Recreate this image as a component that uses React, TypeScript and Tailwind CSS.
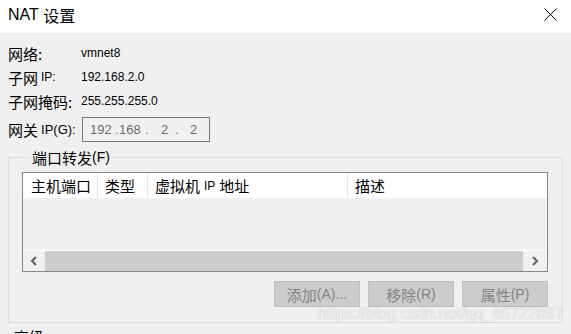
const cjk = '"Noto Sans CJK SC", sans-serif';
const latin = '"Liberation Sans", Arial, sans-serif';

const Zh = ({ children, className = '' }: { children: React.ReactNode; className?: string }) => (
  <span className={`font-['Noto_Sans_CJK_SC',sans-serif] text-[15px] ${className}`}>{children}</span>
);
const En = ({ children, className = '' }: { children: React.ReactNode; className?: string }) => (
  <span className={`font-['Liberation_Sans',Arial,sans-serif] text-[12px] ${className}`}>{children}</span>
);

const Row = ({ label, value }: { label: React.ReactNode; value: string }) => (
  <div className="flex h-[24px] items-center">
    <div className="w-[73px] flex items-center">{label}</div>
    <En className="text-[12px]">{value}</En>
  </div>
);

const Chevron = ({ dir }: { dir: 'left' | 'right' }) => (
  <svg width="8" height="10" viewBox="0 0 8 10">
    {dir === 'left' ? (
      <polyline points="6,1 2,5 6,9" fill="none" stroke="#606060" strokeWidth="2" />
    ) : (
      <polyline points="2,1 6,5 2,9" fill="none" stroke="#606060" strokeWidth="2" />
    )}
  </svg>
);

const buttons = [
  { zh: '添加', en: '(A)...' },
  { zh: '移除', en: '(R)' },
  { zh: '属性', en: '(P)' },
];

export default function App() {
  return (
    <div className="w-[571px] h-[334px] overflow-hidden bg-[#f0f0f0] text-black relative leading-none">
      {/* title bar */}
      <div className="h-[33px] bg-white flex items-start justify-between pl-[8px] pr-[14px] pt-[6px]">
        <div className="flex items-center h-[18px]">
          <span style={{ fontFamily: latin }} className="text-[16px]">NAT&nbsp;</span>
          <span style={{ fontFamily: cjk }} className="text-[16px]">设置</span>
        </div>
        <svg width="13" height="13" viewBox="0 0 13 13" className="mt-[2px]">
          <path d="M0.5 0.5 L12.5 12.5 M12.5 0.5 L0.5 12.5" stroke="#000" strokeWidth="1" fill="none" />
        </svg>
      </div>

      {/* settings */}
      <div className="pl-[8px] pt-[8px] flex flex-col">
        <Row label={<Zh>网络:</Zh>} value="vmnet8" />
        <Row label={<><Zh>子网 </Zh><En className="ml-[3px]">IP:</En></>} value="192.168.2.0" />
        <Row label={<Zh>子网掩码:</Zh>} value="255.255.255.0" />
        <div className="flex h-[28px] items-center mt-[2px]">
          <div className="w-[74px] flex items-center">
            <Zh>网关 </Zh>
            <En className="ml-[3px] text-[13px]">IP(G):</En>
          </div>
          <div className="w-[128px] h-[25px] border border-[#7a7a7a] flex items-center pl-[7px] text-[#6d6d6d] font-['Liberation_Sans',Arial,sans-serif] text-[13px]">
            <span className="w-[25px]">192</span>
            <span className="w-[4px]">.</span>
            <span className="w-[26px]">168</span>
            <span className="w-[16px]">.</span>
            <span className="w-[14px]">2</span>
            <span className="w-[15px]">.</span>
            <span>2</span>
          </div>
        </div>
      </div>

      {/* port forwarding group */}
      <fieldset className="mx-[8px] mt-[4px] border border-[#dcdcdc] h-[176px] pl-[13px] pr-[14px] pb-[14px]">
        <legend className="ml-[8px] px-[2px] h-[20px] flex items-center">
          <Zh>端口转发</Zh>
          <span className="font-['Liberation_Sans',Arial,sans-serif] text-[14px]">(F)</span>
        </legend>
        <div className="mt-[5px] border border-[#828790] flex flex-col">
          <div className="h-[25px] bg-white flex">
            <div className="w-[75px] pl-[8px] flex items-center border-r border-[#e5e5e5]">
              <Zh>主机端口</Zh>
            </div>
            <div className="w-[50px] pl-[7px] flex items-center border-r border-[#e5e5e5]">
              <Zh>类型</Zh>
            </div>
            <div className="w-[200px] pl-[7px] flex items-center border-r border-[#e5e5e5]">
              <Zh>虚拟机 </Zh>
              <En className="mx-[4px]">IP</En>
              <Zh>地址</Zh>
            </div>
            <div className="flex-1 pl-[7px] flex items-center">
              <Zh>描述</Zh>
            </div>
          </div>
          <div className="h-[52px]" />
          <div className="h-[1px] bg-white" />
          <div className="h-[20px] flex">
            <div className="w-[22px] flex items-center justify-center">
              <Chevron dir="left" />
            </div>
            <div className="flex-1 bg-[#cdcdcd]" />
            <div className="w-[24px] flex items-center justify-center">
              <Chevron dir="right" />
            </div>
          </div>
        </div>
        <div className="flex justify-end gap-[8px] mt-[9px]">
          {buttons.map((b) => (
            <div
              key={b.zh}
              className="w-[86px] h-[26px] bg-[#cccccc] border border-[#bfbfbf] flex items-center justify-center text-[#838383]"
            >
              <Zh>{b.zh}</Zh>
              <span className="font-['Liberation_Sans',Arial,sans-serif] text-[14px]">{b.en}</span>
            </div>
          ))}
        </div>
      </fieldset>

      <div className="pl-[14px] mt-[6px]">
        <Zh>高级</Zh>
      </div>

      {/* watermark */}
      <div className="absolute left-[318px] top-[306px] font-['Liberation_Sans',Arial,sans-serif] text-[16px] text-white/85 [text-shadow:0_0_1px_rgba(0,0,0,0.35)]">
        https://blog.csdn.net/qq_45722897
      </div>
    </div>
  );
}
